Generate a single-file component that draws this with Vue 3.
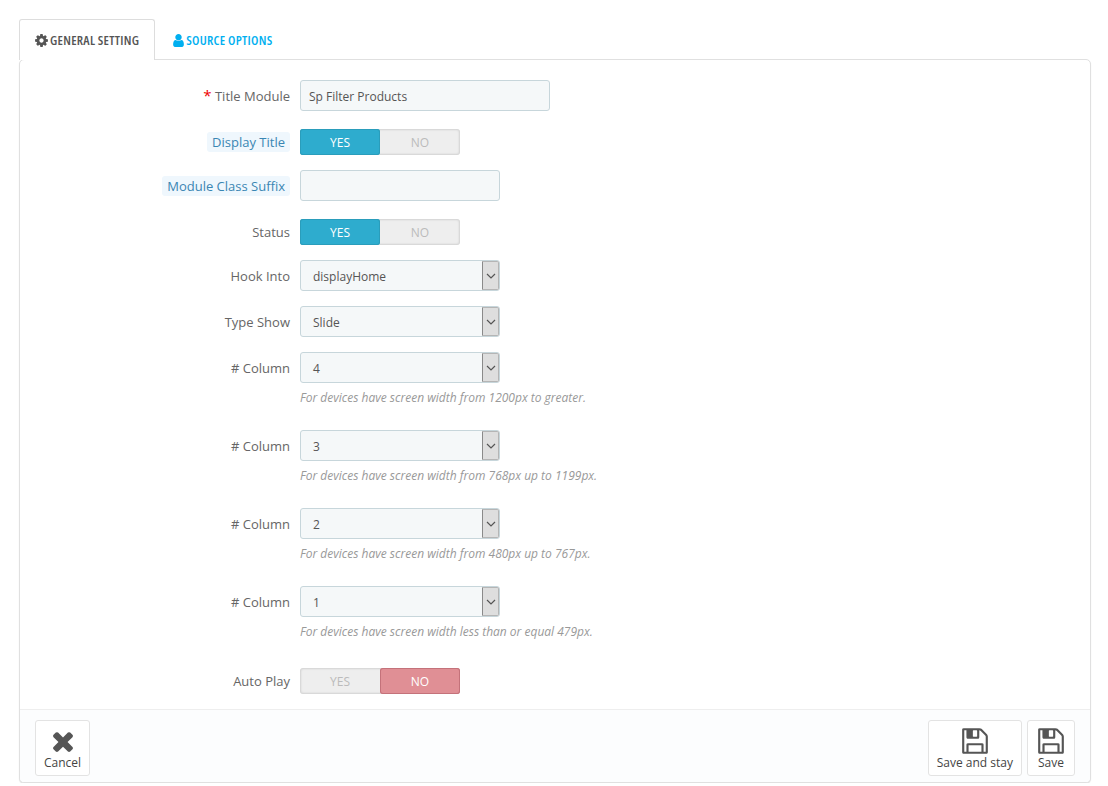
<script setup>
const cog = 'M1152 896q0-106-75-181t-181-75-181 75-75 181 75 181 181 75 181-75 75-181zm512-109v222q0 12-8 23t-20 13l-185 28q-19 54-39 91 35 50 107 138 10 12 10 25t-9 23q-27 37-99 108t-94 71q-12 0-26-9l-138-108q-44 23-91 38-16 136-29 186-7 28-36 28h-222q-14 0-24.500-8.500t-11.500-21.500l-28-184q-49-16-90-37l-141 107q-10 9-25 9-14 0-25-11-126-114-165-168-7-10-7-23 0-12 8-23 15-21 51-66.500t54-70.500q-27-50-41-99l-183-27q-13-2-21-12.500t-8-23.500v-222q0-12 8-23t19-13l186-28q14-46 39-92-40-57-107-138-10-12-10-24 0-10 9-23 26-36 98.500-107.500t94.500-71.500q13 0 26 10l138 107q44-23 91-38 16-136 29-186 7-28 36-28h222q14 0 24.500 8.500t11.500 21.500l28 184q49 16 90 37l142-107q9-9 24-9 13 0 25 10 129 119 165 170 7 8 7 22 0 12-8 23-15 21-51 66.500t-54 70.500q26 50 41 98l183 28q13 2 21 12.500t8 23.500z'
const user = 'M1536 1399q0 109-62.500 187t-150.500 78h-854q-88 0-150.500-78t-62.500-187q0-85 8.500-160.500t31.500-152 58.500-131 94-89 134.500-34.500q131 128 313 128t313-128q76 0 134.500 34.500t94 89 58.500 131 31.500 152 8.500 160.500zm-256-887q0 159-112.500 271.500t-271.500 112.500-271.500-112.500-112.500-271.500 112.500-271.500 271.500-112.500 271.500 112.500 112.500 271.500z'
const times = 'M1490 1322q0 40-28 68l-136 136q-28 28-68 28t-68-28l-294-294-294 294q-28 28-68 28t-68-28l-136-136q-28-28-28-68t28-68l294-294-294-294q-28-28-28-68t28-68l136-136q28-28 68-28t68 28l294 294 294-294q28-28 68-28t68 28l136 136q28 28 28 68t-28 68l-294 294 294 294q28 28 28 68z'
const save = 'M512 1536h768v-384h-768v384zm896 0h128v-896q0-14-10-38.500t-20-34.500l-281-281q-10-10-34-20t-39-10v416q0 40-28 68t-68 28h-576q-40 0-68-28t-28-68v-416h-128v1280h128v-416q0-40 28-68t68-28h832q40 0 68 28t28 68v416zm-384-928v-320q0-13-9.500-22.500t-22.500-9.500h-192q-13 0-22.500 9.500t-9.500 22.500v320q0 13 9.500 22.500t22.500 9.500h192q13 0 22.500-9.500t9.500-22.500zm640 32v928q0 40-28 68t-68 28h-1344q-40 0-68-28t-28-68v-1344q0-40 28-68t68-28h928q40 0 88 20t76 48l280 280q28 28 48 76t20 88z'
const columns = [
  { value: '4', help: 'For devices have screen width from 1200px to greater.' },
  { value: '3', help: 'For devices have screen width from 768px up to 1199px.' },
  { value: '2', help: 'For devices have screen width from 480px up to 767px.' },
  { value: '1', help: 'For devices have screen width less than or equal 479px.' },
]
</script>

<template>
  <div class="page">
    <ul class="tabs">
      <li class="tab active">
        <svg class="tab-icon" viewBox="0 0 1792 1792"><path :d="cog" /></svg>
        <span>GENERAL SETTING</span>
      </li>
      <li class="tab">
        <svg class="tab-icon" viewBox="0 0 1792 1792"><path :d="user" /></svg>
        <span>SOURCE OPTIONS</span>
      </li>
    </ul>

    <form class="panel" @submit.prevent>
      <div class="fields">
        <div class="row">
          <label class="label"><span class="req">*</span> Title Module</label>
          <input class="input wide" value="Sp Filter Products" />
        </div>
        <div class="row row-toggle">
          <label class="label"><span class="hint">Display Title</span></label>
          <div class="toggle">
            <span class="opt on">YES</span>
            <span class="opt">NO</span>
          </div>
        </div>
        <div class="row">
          <label class="label"><span class="hint">Module Class Suffix</span></label>
          <input class="input" value="" />
        </div>
        <div class="row row-toggle">
          <label class="label">Status</label>
          <div class="toggle">
            <span class="opt on">YES</span>
            <span class="opt">NO</span>
          </div>
        </div>
        <div class="row">
          <label class="label">Hook Into</label>
          <div class="select">
            <span class="select-text">displayHome</span>
            <span class="select-arrow"><svg viewBox="0 0 10 6"><path d="M1 1l4 4 4-4" /></svg></span>
          </div>
        </div>
        <div class="row">
          <label class="label">Type Show</label>
          <div class="select">
            <span class="select-text">Slide</span>
            <span class="select-arrow"><svg viewBox="0 0 10 6"><path d="M1 1l4 4 4-4" /></svg></span>
          </div>
        </div>
        <div v-for="col in columns" :key="col.value" class="row row-help">
          <label class="label"># Column</label>
          <div>
            <div class="select">
              <span class="select-text">{{ col.value }}</span>
              <span class="select-arrow"><svg viewBox="0 0 10 6"><path d="M1 1l4 4 4-4" /></svg></span>
            </div>
            <p class="help">{{ col.help }}</p>
          </div>
        </div>
        <div class="row row-toggle last">
          <label class="label">Auto Play</label>
          <div class="toggle">
            <span class="opt">YES</span>
            <span class="opt off">NO</span>
          </div>
        </div>
      </div>

      <div class="footer">
        <button type="button" class="btn">
          <svg class="btn-icon" viewBox="0 0 1792 1792"><path :d="times" /></svg>
          <span>Cancel</span>
        </button>
        <div class="footer-right">
          <button type="button" class="btn">
            <svg class="btn-icon" viewBox="0 0 1792 1792"><path :d="save" /></svg>
            <span>Save and stay</span>
          </button>
          <button type="button" class="btn">
            <svg class="btn-icon" viewBox="0 0 1792 1792"><path :d="save" /></svg>
            <span>Save</span>
          </button>
        </div>
      </div>
    </form>
  </div>
</template>

<style>
html, body { margin: 0; background: #fff; }
</style>

<style scoped>
.page {
  width: 1072px;
  padding: 19px 17px 0 19px;
  font-family: "Open Sans", "Noto Sans", sans-serif;
  font-size: 13px;
  color: #555;
}
.tabs {
  list-style: none;
  margin: 0;
  padding: 0;
  display: flex;
  position: relative;
  z-index: 1;
  margin-bottom: -1px;
}
.tab {
  display: flex;
  align-items: center;
  gap: 1px;
  height: 41px;
  box-sizing: border-box;
  padding: 0 15px 0 14px;
  border: 1px solid transparent;
  border-bottom: 0;
  font-size: 13px;
  font-weight: 600;
  font-stretch: condensed;
  letter-spacing: 0.27px;
  color: #00aff0;
  white-space: nowrap;
}
.tab + .tab { padding-left: 15px; gap: 0; }
.tab.active {
  color: #555;
  background: #fff;
  border-color: #ddd;
  border-radius: 3px 3px 0 0;
}
.tab-icon { width: 15px; height: 15px; fill: currentColor; flex: none; }
.panel {
  border: 1px solid #e0e0e0;
  border-radius: 5px;
  box-shadow: 0 1px 1px rgba(0, 0, 0, 0.12);
  background: #fff;
  overflow: hidden;
}
.fields {
  display: flex;
  flex-direction: column;
  padding: 20px 0 15px;
}
.row {
  display: flex;
  align-items: flex-start;
  gap: 10px;
  margin-bottom: 15px;
}
.row-toggle { margin-top: 3px; }
.row.last { margin-top: 4px; margin-bottom: 0; }
.row-help { margin-bottom: 0; }
.label {
  flex: none;
  width: 270px;
  height: 31px;
  box-sizing: border-box;
  text-align: right;
  line-height: 33px;
  color: #666;
}
.row-toggle .label { line-height: 26px; height: 26px; }
.req { color: #e00; font-size: 15px; line-height: 1; }
.hint {
  background: #eff7fd;
  color: #3a86b3;
  padding: 1px 5px;
  border-radius: 3px;
}
.input {
  display: block;
  width: 200px;
  height: 31px;
  box-sizing: border-box;
  padding: 2px 8px 0;
  border: 1px solid #c7d6db;
  border-radius: 3px;
  background: #f5f8f9;
  font: inherit;
  font-size: 12px;
  color: #555;
  outline: 0;
}
.input.wide { width: 250px; }
.toggle {
  display: flex;
  width: 160px;
  height: 26px;
  border-radius: 3px;
  background: #eee;
  box-shadow: inset 0 0 2px 1px rgba(0, 0, 0, 0.12);
}
.opt {
  flex: 1;
  text-align: center;
  line-height: 27px;
  font-size: 12px;
  color: #bbb;
}
.opt.on {
  background: #2eacce;
  color: #fff;
  border-radius: 3px;
  box-shadow: inset 0 0 0 1px #2a9dbb;
}
.opt.off {
  background: #e08f95;
  color: #fff;
  border-radius: 3px;
  box-shadow: inset 0 0 0 1px #c4727a;
}
.select {
  display: flex;
  width: 200px;
  height: 31px;
  box-sizing: border-box;
  border: 1px solid #c7d6db;
  border-radius: 3px;
  background: #f5f8f9;
  font-size: 12px;
}
.select-text {
  flex: 1;
  padding-left: 12px;
  line-height: 31px;
  color: #555;
}
.select-arrow {
  width: 17px;
  box-sizing: border-box;
  border: 1px solid #b5b5b5;
  border-left-color: #8a8a8a;
  background: #dedede;
  display: flex;
  align-items: center;
  justify-content: center;
  border-radius: 0 2px 2px 0;
}
.select-arrow svg {
  width: 10px;
  height: 6px;
  fill: none;
  stroke: #555;
  stroke-width: 1.2;
}
.help {
  margin: 6px 0 23px;
  height: 18px;
  line-height: 18px;
  font-size: 12px;
  font-style: italic;
  color: #999;
  white-space: nowrap;
}
.footer {
  display: flex;
  justify-content: space-between;
  padding: 10px 15px 6px;
  border-top: 1px solid #eee;
  background: #fcfdfe;
}
.footer-right { display: flex; gap: 5px; }
.btn {
  display: flex;
  flex-direction: column;
  align-items: center;
  height: 56px;
  box-sizing: border-box;
  padding: 6px 8px 0;
  border: 1px solid #e3e3e3;
  border-radius: 3px;
  background: #fff;
  font: inherit;
  font-size: 12px;
  color: #444;
}
.btn-icon { width: 30px; height: 30px; fill: #555; margin-top: -1px; margin-bottom: -2px; }
</style>
